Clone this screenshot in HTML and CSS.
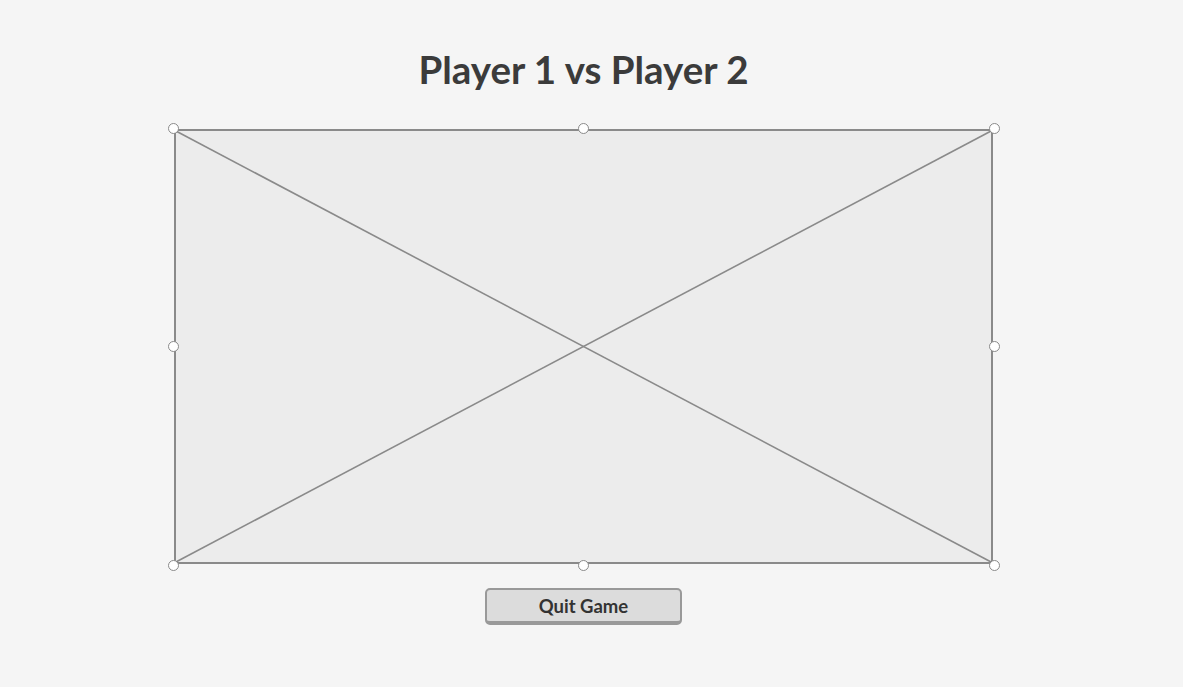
FILE: index.html
```html
<!DOCTYPE html>
<html lang="en">
<head>
  <meta charset="UTF-8">
  <title>Game</title>
  <meta name="viewport" content="width=device-width, initial-scale=1.0">

  <link rel="stylesheet" href="styles.css">
</head>
<body>

  <div class="page">
    <h1>Player 1 vs Player 2</h1>

    <div class="canvas">
      <div class="frame">
        <svg class="cross" viewBox="0 0 100 100" preserveAspectRatio="none">
          <line x1="0" y1="0" x2="100" y2="100" vector-effect="non-scaling-stroke"/>
          <line x1="100" y1="0" x2="0" y2="100" vector-effect="non-scaling-stroke"/>
        </svg>
      </div>
      <span class="handle tl"></span>
      <span class="handle tc"></span>
      <span class="handle tr"></span>
      <span class="handle ml"></span>
      <span class="handle mr"></span>
      <span class="handle bl"></span>
      <span class="handle bc"></span>
      <span class="handle br"></span>
    </div>

    <button class="quit">Quit Game</button>
  </div>

</body>
</html>
```

FILE: styles.css
```css
body {
  margin: 0;
  background-color: #f5f5f5;
  color: #3b3b3b;
  font-family: Lato, "Open Sans", sans-serif;
}

.page {
  width: 1167px;
  height: 687px;
  padding-top: 46px;
  box-sizing: border-box;
  display: flex;
  flex-direction: column;
  align-items: center;
}

h1 {
  margin: 0;
  font-size: 38.5px;
  line-height: 46px;
  font-weight: 700;
}

.canvas {
  position: relative;
  width: 821px;
  height: 437px;
  margin-top: 36px;
  padding: 1px;
  box-sizing: border-box;
}

.frame {
  width: 100%;
  height: 100%;
  background-color: #ececec;
  border: 2px solid #8a8a8a;
  box-sizing: border-box;
}

.cross {
  display: block;
  width: 100%;
  height: 100%;
}

.cross line {
  stroke: #8a8a8a;
  stroke-width: 1.6;
}

.handle {
  position: absolute;
  width: 9px;
  height: 9px;
  margin: -5.5px 0 0 -5.5px;
  border: 1px solid #8a8a8a;
  border-radius: 50%;
  background: #fff;
}

.tl, .tc, .tr { top: 0; }
.ml, .mr { top: 50%; }
.bl, .bc, .br { top: 100%; }
.tl, .ml, .bl { left: 0; }
.tc, .bc { left: 50%; }
.tr, .mr, .br { left: 100%; }

.quit {
  margin-top: 23px;
  width: 197px;
  height: 37px;
  padding: 0;
  background-color: #dcdcdc;
  color: #333;
  border: 2px solid #999;
  border-bottom-width: 4px;
  border-radius: 5px;
  font-family: Lato, "Open Sans", sans-serif;
  font-size: 18.5px;
  font-weight: 700;
  cursor: pointer;
}
```
